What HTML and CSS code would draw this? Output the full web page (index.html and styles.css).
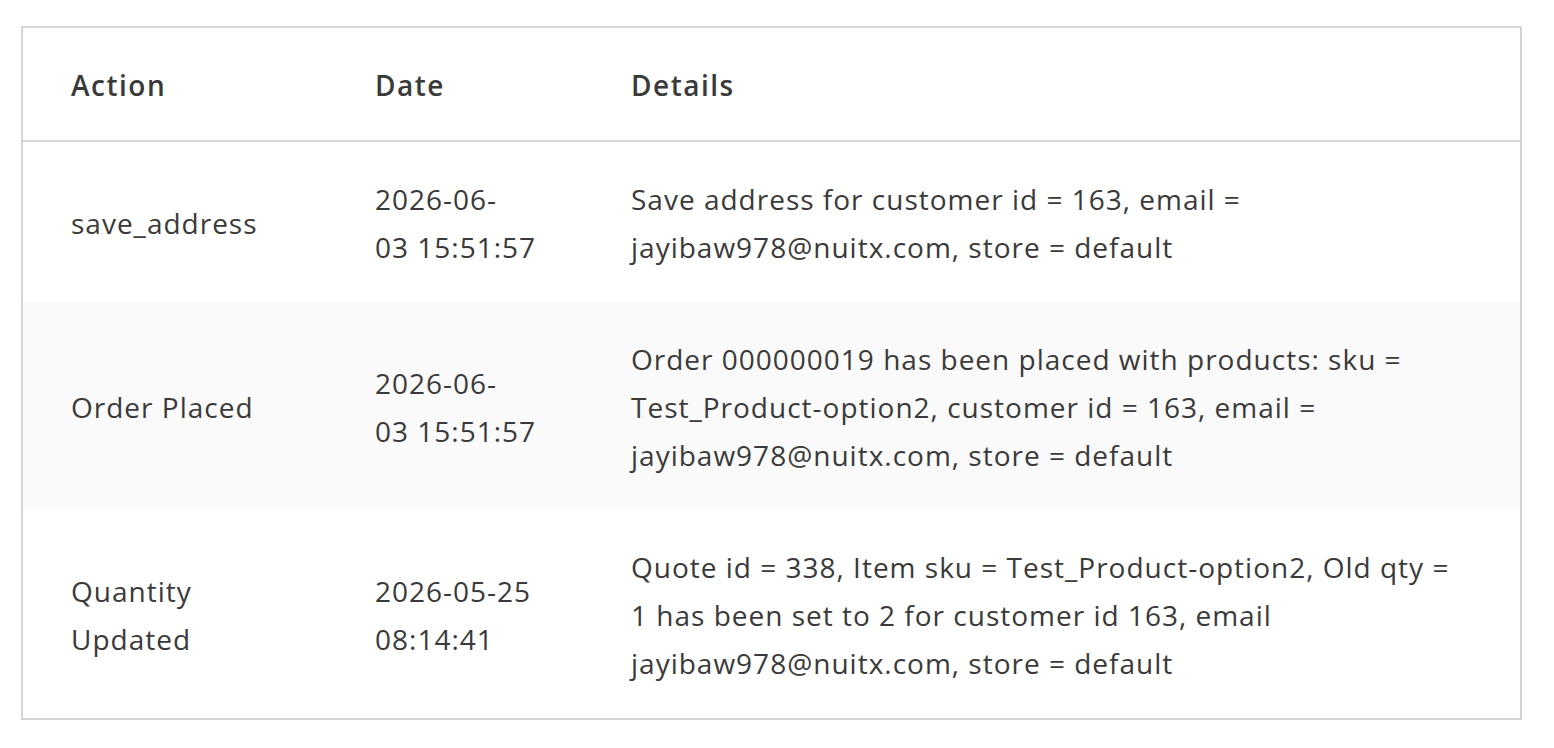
FILE: index.html
```html
<!DOCTYPE html>
<html lang="en">
<head>
<meta charset="utf-8">
<title>Activity log</title>
<link rel="stylesheet" href="styles.css">
</head>
<body>
<div class="page">
  <table class="log">
    <colgroup>
      <col class="col-action">
      <col class="col-date">
      <col class="col-details">
    </colgroup>
    <thead>
      <tr>
        <th>Action</th>
        <th>Date</th>
        <th>Details</th>
      </tr>
    </thead>
    <tbody>
      <tr>
        <td>save_address</td>
        <td>2026-06-<br>03 15:51:57</td>
        <td>Save address for customer id = 163, email = jayibaw978@nuitx.com, store = default</td>
      </tr>
      <tr class="alt">
        <td>Order Placed</td>
        <td>2026-06-<br>03 15:51:57</td>
        <td>Order 000000019 has been placed with products: sku = Test_Product-option2, customer id = 163, email = jayibaw978@nuitx.com, store = default</td>
      </tr>
      <tr>
        <td>Quantity Updated</td>
        <td>2026-05-25 08:14:41</td>
        <td>Quote id = 338, Item sku = Test_Product-option2, Old qty = 1 has been set to 2 for customer id 163, email jayibaw978@nuitx.com, store = default</td>
      </tr>
    </tbody>
  </table>
</div>
</body>
</html>
```

FILE: styles.css
```css
html, body {
  margin: 0;
  padding: 0;
  background: #ffffff;
}

.page {
  padding: 26px 0 0 21px;
}

.log {
  width: 1501px;
  border: 2px solid #d5d5d5;
  border-collapse: separate;
  border-spacing: 0;
  table-layout: fixed;
  font-family: "Open Sans", "Noto Sans", sans-serif;
  font-size: 28px;
  letter-spacing: 1px;
  line-height: 48px;
  color: #3a3a3a;
}

.col-action { width: 304px; }
.col-date { width: 256px; }

.log th,
.log td {
  padding: 33px 46px 31px 48px;
  text-align: left;
  vertical-align: middle;
}

.log th {
  font-weight: 600;
  letter-spacing: 1.5px;
  border-bottom: 2px solid #d5d5d5;
}

.log tr.alt td {
  background: #fafafa;
}
```
